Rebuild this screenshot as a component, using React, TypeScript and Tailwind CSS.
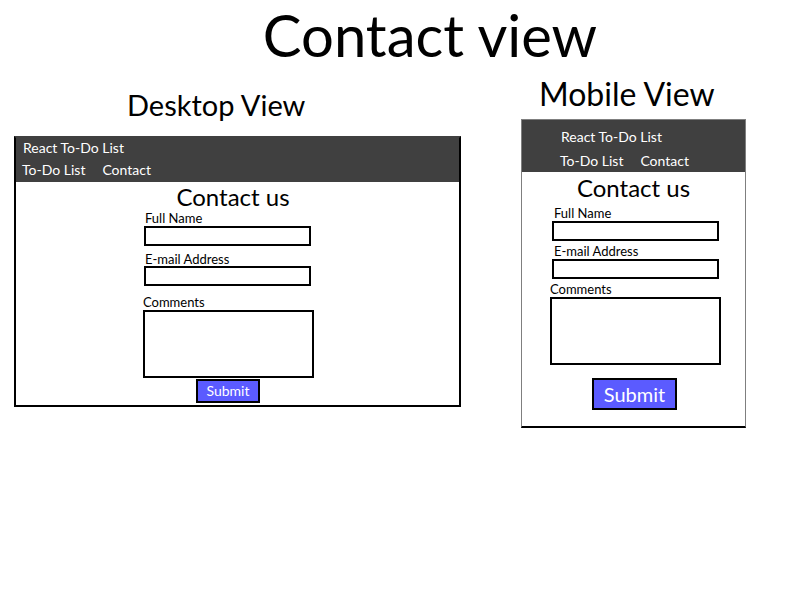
import React from "react";

const DesktopFrame = () => (
  <div className="w-[447px] h-[271px] border-2 border-black border-t-[#404040] flex flex-col">
    {/* barra de navegação */}
    <div className="bg-[#404040] h-[44px] text-white text-[14px] leading-none pl-[7px] pt-0">
      <div className="h-[20px] flex items-center">React To-Do List</div>
      <div className="h-[24px] flex items-center gap-[17px] -ml-[1px]">
        <span>To-Do List</span>
        <span>Contact</span>
      </div>
    </div>
    <div className="flex-1 flex flex-col">
      <div className="text-center text-[24px] leading-none pt-[3px] h-[30px] pr-[9px]">Contact us</div>
      <div className="ml-[127px] flex flex-col">
        <span className="text-[13px] leading-none pl-[2px] h-[13px] flex items-end">Full Name</span>
        <div className="w-[167px] h-[20px] border-2 border-black ml-[1px] mt-[1px]" />
        <span className="text-[13px] leading-none pl-[2px] h-[20px] flex items-end">E-mail Address</span>
        <div className="w-[167px] h-[20px] border-2 border-black ml-[1px]" />
        <span className="text-[13px] leading-none h-[23px] flex items-end">Comments</span>
        <div className="w-[171px] h-[68px] border-2 border-black mt-[1px]" />
      </div>
      <div className="ml-[180px] mt-[1px] w-[64px] h-[24px] border-2 border-black bg-[#5b5bff] text-white text-[14px] leading-none flex items-center justify-center">
        Submit
      </div>
    </div>
  </div>
);

const MobileFrame = () => (
  <div className="w-[225px] h-[309px] border border-[#7f7f7f] border-b-2 border-b-black flex flex-col">
    <div className="bg-[#404040] h-[52px] text-white text-[14px] leading-none pt-[6px]">
      <div className="h-[22px] flex items-center pl-[39px]">React To-Do List</div>
      <div className="h-[26px] flex items-center gap-[17px] pl-[38px]">
        <span>To-Do List</span>
        <span>Contact</span>
      </div>
    </div>
    <div className="flex-1 flex flex-col">
      <div className="text-center text-[24px] leading-none pt-[4px] h-[32px]">Contact us</div>
      <div className="ml-[28px] flex flex-col">
        <span className="text-[13px] leading-none pl-[4px] h-[16px] flex items-end">Full Name</span>
        <div className="w-[167px] h-[20px] border-2 border-black ml-[2px] mt-[1px]" />
        <span className="text-[13px] leading-none pl-[4px] h-[17px] flex items-end">E-mail Address</span>
        <div className="w-[167px] h-[20px] border-2 border-black ml-[2px] mt-[1px]" />
        <span className="text-[13px] leading-none h-[17px] flex items-end">Comments</span>
        <div className="w-[171px] h-[68px] border-2 border-black mt-[1px]" />
      </div>
      <div className="ml-[70px] mt-[13px] w-[85px] h-[32px] border-2 border-black bg-[#5b5bff] text-white text-[20px] leading-none flex items-center justify-center">
        Submit
      </div>
    </div>
  </div>
);

export default function App() {
  return (
    <div className="w-[800px] h-[600px] bg-white text-black font-['Lato',sans-serif]">
      {/* título do slide */}
      <div className="flex justify-center pl-[60px]">
        <h1 className="text-[58px] leading-[70px]">Contact view</h1>
      </div>
      <div className="flex items-start">
        <div className="ml-[14px] flex flex-col">
          <div className="ml-[113px] mt-[20px] h-[46px] text-[29px] leading-none">Desktop View</div>
          <DesktopFrame />
        </div>
        <div className="ml-[60px] flex flex-col">
          <div className="ml-[18px] mt-[8px] h-[41px] text-[32px] leading-none">Mobile View</div>
          <MobileFrame />
        </div>
      </div>
    </div>
  );
}
